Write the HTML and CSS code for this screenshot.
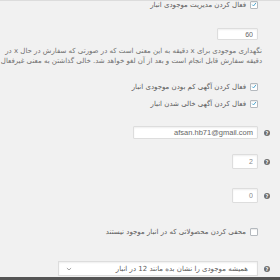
FILE: index.html
```html
<!DOCTYPE html>
<html lang="fa" dir="rtl">
<head>
<meta charset="utf-8">
<link rel="stylesheet" href="styles.css">
</head>
<body>
<div class="page">
  <div class="row check-row r-manage">
    <span class="cb checked"><svg viewBox="0 0 10 10"><path d="M2 5.2 L4.2 7.4 L8.2 2.4" /></svg></span>
    <span class="label">فعال کردن مدیریت موجودی انبار</span>
  </div>

  <div class="row plain-row r-hold">
    <input class="text w-hold" type="text" value="60">
  </div>

  <div class="desc">
    <div class="line">نگهداری موجودی برای x دقیقه به این معنی است که در صورتی که سفارش در حال x در</div>
    <div class="line">دقیقه سفارش قابل انجام است و بعد از آن لغو خواهد شد. خالی گذاشتن به معنی غیرفعال</div>
  </div>

  <div class="row check-row r-low">
    <span class="cb checked"><svg viewBox="0 0 10 10"><path d="M2 5.2 L4.2 7.4 L8.2 2.4" /></svg></span>
    <span class="label">فعال کردن آگهی کم بودن موجودی انبار</span>
  </div>

  <div class="row check-row r-out">
    <span class="cb checked"><svg viewBox="0 0 10 10"><path d="M2 5.2 L4.2 7.4 L8.2 2.4" /></svg></span>
    <span class="label">فعال کردن آگهی خالی شدن انبار</span>
  </div>

  <div class="row help-row r-email">
    <span class="help">?</span>
    <input class="text w-email" type="text" value="afsan.hb71@gmail.com">
  </div>

  <div class="row help-row r-lowamt">
    <span class="help">?</span>
    <input class="text num" type="text" value="2">
  </div>

  <div class="row help-row r-outamt">
    <span class="help">?</span>
    <input class="text num" type="text" value="0">
  </div>

  <div class="row check-row r-hide">
    <span class="cb"></span>
    <span class="label">محفی کردن محصولاتی که در انبار موجود نیستند</span>
  </div>

  <div class="row help-row r-format">
    <span class="help">?</span>
    <div class="select">
      <span class="select-text">همیشه موجودی را نشان بده مانند 12 در انبار</span>
      <svg class="chev" viewBox="0 0 10 6"><path d="M1.5 1.5 L5 4.5 L8.5 1.5" /></svg>
    </div>
  </div>

  <div class="bottom-bar"></div>
</div>
</body>
</html>
```

FILE: styles.css
```css
html, body {
  margin: 0;
  padding: 0;
  background: #f1f1f1;
  overflow: hidden;
}

.page {
  width: 280px;
  height: 280px;
  overflow: hidden;
  display: flex;
  flex-direction: column;
  border-top: 1px solid #dcdcdc;
  box-sizing: border-box;
  font-family: "DejaVu Sans", "Noto Sans", sans-serif;
  font-size: 7px;
  color: #5a5a5a;
}

.row {
  display: flex;
  align-items: center;
  flex-shrink: 0;
}

.check-row {
  padding-right: 22px;
  height: 9px;
  gap: 4px;
}

.plain-row {
  padding-right: 22px;
}

.help-row {
  padding-right: 10px;
  gap: 6px;
}

.r-manage { margin-top: -1px; }
.r-hold { margin-top: 19px; }
.r-low { margin-top: 16px; }
.r-out { margin-top: 8px; }
.r-email { margin-top: 18px; }
.r-lowamt { margin-top: 15px; }
.r-outamt { margin-top: 19px; }
.r-hide { margin-top: 24px; }
.r-format { margin-top: 25px; }

.cb {
  width: 8px;
  height: 8px;
  box-sizing: border-box;
  border: 1px solid #b4b9be;
  background: #fff;
  border-radius: 1px;
  box-shadow: inset 0 1px 1px rgba(0,0,0,0.08);
  display: flex;
  align-items: center;
  justify-content: center;
}

.cb svg {
  width: 7px;
  height: 7px;
  fill: none;
  stroke: #3a9bc9;
  stroke-width: 1.5;
}

.label {
  white-space: nowrap;
  color: #5a5a5a;
}

.text {
  box-sizing: border-box;
  border: 1px solid #ddd;
  background: #fff;
  box-shadow: inset 0 1px 2px rgba(0,0,0,0.07);
  border-radius: 1px;
  font-family: "Liberation Sans", Arial, sans-serif;
  font-size: 7px;
  color: #666;
  padding: 0 4px;
  margin: 0;
  direction: rtl;
  text-align: right;
  outline: none;
}

.w-hold {
  width: 41px;
  height: 12px;
}

.w-email {
  width: 125px;
  height: 13px;
  font-size: 7.5px;
}

.num {
  width: 26px;
  height: 15px;
  color: #888;
}

.help {
  width: 6px;
  height: 6px;
  border-radius: 50%;
  background: #6e6e6e;
  color: #fff;
  font-family: "DejaVu Sans", sans-serif;
  font-size: 5px;
  font-weight: bold;
  line-height: 6px;
  text-align: center;
  flex-shrink: 0;
}

.desc {
  margin-top: 6px;
  padding-right: 18px;
  color: #6e6e6e;
  line-height: 10px;
  flex-shrink: 0;
}

.desc .line {
  white-space: nowrap;
}

.select {
  width: 200px;
  height: 15px;
  box-sizing: border-box;
  border: 1px solid #ddd;
  background: #fff;
  box-shadow: inset 0 1px 2px rgba(0,0,0,0.07);
  display: flex;
  align-items: center;
  justify-content: space-between;
  padding: 0 9px 0 7px;
}

.select-text {
  white-space: nowrap;
  color: #5a5a5a;
}

.chev {
  width: 6px;
  height: 4px;
  fill: none;
  stroke: #888;
  stroke-width: 1.3;
}

.bottom-bar {
  margin-top: 1px;
  height: 3px;
  background: #555;
  flex-shrink: 0;
}
```
